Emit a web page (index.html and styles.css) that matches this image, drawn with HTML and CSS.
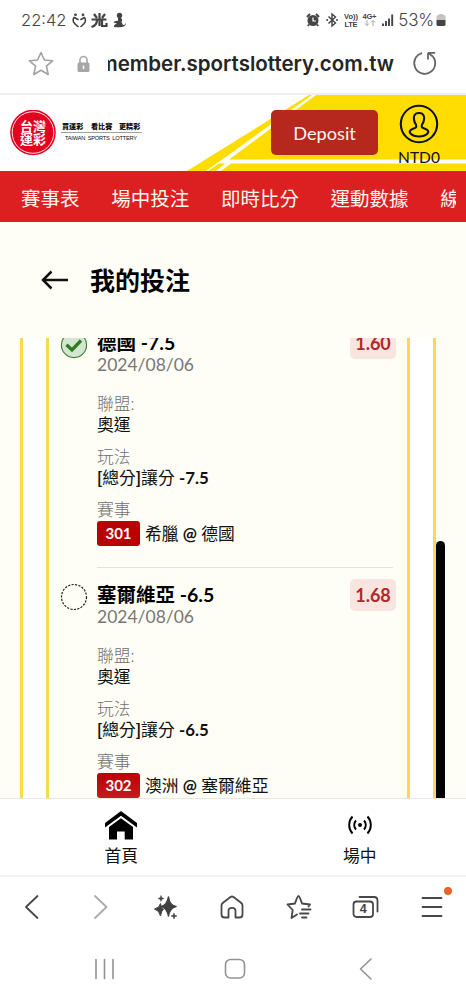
FILE: index.html
```html
<!DOCTYPE html>
<html lang="zh-Hant">
<head>
<meta charset="utf-8">
<title>我的投注</title>
<link rel="stylesheet" href="styles.css">
</head>
<body>
<div class="phone">
  <div class="status">
    <span class="clock">22:42</span>
    <svg class="status-left" width="54" height="18" viewBox="0 0 54 18">
      <path d="M2 5.500C-.5 9.500 3 12 6 14.500M12.500 5.500C15 9.500 12 12 9 14.500M2.300 5.500L6 7.500M12.300 5.500L9 7.500" fill="none" stroke="#444" stroke-width="1.600" stroke-linecap="round"/>
      <circle cx="3.500" cy="2.800" r="1.400" fill="#444"/><circle cx="11" cy="2.800" r="1.400" fill="#444"/>
      <path d="M19.500 7.500H34.500M22 2L25 6M33 2L30 6M27.500 1V8M25 8C25 12 23 14 19.500 15M30 8V14H34.500V11M27.500 8V14" fill="none" stroke="#444" stroke-width="2.200"/>
      <circle cx="47.500" cy="3.500" r="2.700" fill="#444"/>
      <path d="M46 5.500C50 5 51 8 49.500 10L51 13C52.500 13.500 53 12 54 11C53.500 15.500 49 15.500 42 15C41.500 13 43.500 12 45 11.500L41.500 10.500C42.500 8.500 45 9.500 46 8.500Z" fill="#444"/>
    </svg>
    <svg class="status-right" width="91" height="20" viewBox="0 0 91 20">
      <circle cx="7" cy="10.500" r="5.500" fill="#444"/>
      <path d="M1 7L4 4M10 4L13 7M3 14.500L1.800 16M11 14.500L12.200 16" stroke="#444" stroke-width="2"/>
      <path d="M7 7.500V11H10" fill="none" stroke="#fff" stroke-width="1.200"/>
      <path d="M22.500 6.500L29.500 13L26 16V4L29.500 7L22.500 13.500" fill="none" stroke="#444" stroke-width="1.400"/>
      <circle cx="21.200" cy="10" r="1" fill="#444"/><circle cx="31" cy="10" r="1" fill="#444"/>
      <text x="38" y="9" class="tiny" textLength="14">Vo))</text>
      <text x="38.500" y="16.500" class="tiny" textLength="13">LTE</text>
      <text x="56.500" y="9" class="tiny" textLength="14">4G+</text>
      <path d="M61 10V15.500M59 13.500L61 15.500L63 13.500M67 16V10.500M65 12.500L67 10.500L69 12.500" fill="none" stroke="#aaa"/>
      <path d="M77 16V13.500M80 16V11M83 16V8.500M86.200 16V4.500" stroke="#444" stroke-width="1.900"/>
    </svg>
    <span class="percent">53%</span>
    <svg width="10" height="14" viewBox="0 0 10 14"><path d="M3 1h4v1h1.500L9.500 3.500V7H.5V3.500L1.500 2H3Z" fill="#c4c4c4"/><path d="M.5 7h9v5l-1 1h-7l-1-1Z" fill="#444"/></svg>
  </div>

  <div class="address">
    <svg class="fav" width="26" height="26" viewBox="0 0 26 26"><path d="M13 1.500L16.400 9L24.500 9.800L18.400 15.200L20.200 23.500L13 19.200L5.800 23.500L7.600 15.200L1.500 9.800L9.600 9Z" fill="none" stroke="#a2a2a2" stroke-width="1.600" stroke-linejoin="round"/></svg>
    <svg class="lock" width="13" height="18" viewBox="0 0 13 18"><path d="M3 8V5a3.500 3.500 0 0 1 7 0V8" fill="none" stroke="#aaa" stroke-width="1.700"/><rect x=".5" y="7.500" width="12" height="9.500" rx="1.500" fill="#a6a6a6"/><path d="M6.500 10.500V14" stroke="#fff" stroke-width="1.500"/></svg>
    <div class="url"><span>member.sportslottery.com.tw</span></div>
    <svg class="reload" width="25" height="25" viewBox="0 0 25 25"><path d="M10 2.100A10.500 10.500 0 1 0 20.500 5.200L16 1.800M16 1.800H23.200M16 1.800V8.500" fill="none" stroke="#666" stroke-width="1.800"/></svg>
  </div>

  <header class="site-head">
    <svg class="head-art" width="466" height="76" viewBox="0 0 466 76">
      <path d="M187 76L309 0H466V76Z" fill="#ffdd00"/>
      <path d="M206 76L312 0L316 0L229 64.500H466V68.500H231L221 76H216L225 68.500H219L208 76Z" fill="#fffef5"/>
    </svg>
    <svg class="logo" width="132" height="46" viewBox="0 0 132 46">
      <circle cx="23" cy="22.500" r="22.800" fill="#e60020"/>
      <circle cx="23" cy="22.500" r="20.800" fill="none" stroke="#fff" stroke-width=".9"/>
      <text x="10" y="20.500" class="seal">台灣</text>
      <text x="10" y="34" class="seal">運彩</text>
      <text x="52" y="19" class="motto">買運彩</text><text x="81" y="19" class="motto">看比賽</text><text x="109" y="19" class="motto">更精彩</text>
      <path d="M51 22.500H132" stroke="#777" stroke-width=".7"/>
      <text x="55" y="30" class="brand" textLength="72">TAIWAN&#160; SPORTS&#160; LOTTERY</text>
    </svg>
    <button class="deposit">Deposit</button>
    <div class="account">
      <svg width="40" height="40" viewBox="0 0 40 40"><circle cx="20" cy="20" r="18.200" fill="none" stroke="#111" stroke-width="2.100"/><path d="M20 9C15.500 9 14.500 12 15 15.500C15.300 18 16 19.500 17 20.500C18 23.500 16.500 24 13.500 25C10.500 26.200 10 28 11.500 29.500C15.500 33.500 24.500 33.500 28.500 29.500C30 28 29.500 26.200 26.500 25C23.500 24 22 23.500 23 20.500C24 19.500 24.700 18 25 15.500C25.500 12 24.500 9 20 9Z" fill="none" stroke="#111" stroke-width="2.100"/></svg>
      <span>NTD0</span>
    </div>
  </header>

  <nav class="menu">
    <div class="menu-clip"><a>賽事表</a><a>場中投注</a><a>即時比分</a><a>運動數據</a><a>線上</a></div>
  </nav>

  <div class="title-row">
    <svg width="28" height="20" viewBox="0 0 28 20"><path d="M10.500 1.500L2 10L10.500 18.500M2 10H27" fill="none" stroke="#111" stroke-width="2.500"/></svg>
    <h1>我的投注</h1>
  </div>

  <main class="viewport">
    <div class="slip">
      <div class="card">
        <section class="bet">
          <svg class="mark" width="28" height="28" viewBox="0 0 28 28"><circle cx="14" cy="14" r="12.600" fill="#d3e6cf" stroke="#3f7d3a" stroke-width="1.100"/><path d="M6.500 13.800L12 19L21 9.500" fill="none" stroke="#2e7d24" stroke-width="3.300"/></svg>
          <div class="detail">
            <div class="pick">德國 -7.5</div>
            <div class="date">2024/08/06</div>
            <div class="group first"><div class="label">聯盟:</div><div class="value">奧運</div></div>
            <div class="group"><div class="label">玩法</div><div class="value"><b>[</b>總分<b>]</b>讓分 <b>-7.5</b></div></div>
            <div class="group"><div class="label">賽事</div></div>
            <div class="match"><span class="code">301</span><span>希臘 <b>@</b> 德國</span></div>
          </div>
          <span class="odds">1.60</span>
        </section>
        <section class="bet">
          <svg class="mark" width="28" height="28" viewBox="0 0 28 28"><circle cx="14" cy="14" r="12.500" fill="none" stroke="#222" stroke-width="1.200" stroke-dasharray="2.200 1.300"/></svg>
          <div class="detail">
            <div class="pick">塞爾維亞 -6.5</div>
            <div class="date">2024/08/06</div>
            <div class="group first"><div class="label">聯盟:</div><div class="value">奧運</div></div>
            <div class="group"><div class="label">玩法</div><div class="value"><b>[</b>總分<b>]</b>讓分 <b>-6.5</b></div></div>
            <div class="group"><div class="label">賽事</div></div>
            <div class="match"><span class="code shaded">302</span><span>澳洲 <b>@</b> 塞爾維亞</span></div>
          </div>
          <span class="odds">1.68</span>
        </section>
      </div>
    </div>
    <div class="track"><div class="thumb"></div></div>
  </main>

  <div class="tabs">
    <div class="tab">
      <svg width="32" height="30" viewBox="0 0 32 30"><path d="M0 12L16 0L32 12V16.500L16 4.700L0 16.500Z"/><path d="M4 16L16 7.200L28 16V28.500H19.700V20.500H12V28.500H4Z"/></svg>
      <span>首頁</span>
    </div>
    <div class="tab">
      <svg width="26" height="30" viewBox="0 0 26 30"><circle cx="13" cy="15" r="2"/><path d="M9 10.500A6.500 6.500 0 0 0 9 19.500M17 10.500A6.500 6.500 0 0 1 17 19.500M5.500 6.500A12.500 12.500 0 0 0 5.500 23.500M20.500 6.500A12.500 12.500 0 0 1 20.500 23.500" fill="none" stroke="#000" stroke-width="1.900"/></svg>
      <span>場中</span>
    </div>
  </div>

  <div class="toolbar">
    <svg viewBox="0 0 30 30"><path d="M20.500 4L9 15L20.500 26" class="line"/></svg>
    <svg viewBox="0 0 30 30"><path d="M11 4L22.500 15L11 26" class="line pale"/></svg>
    <svg viewBox="0 0 30 30"><g fill="#404040"><path d="M18.500 5Q19.500 13.500 26 14.500Q19.500 16 18.500 24Q17 16 11.500 14.500Q17 13.500 18.500 5Z" stroke="#404040" stroke-width="1.500" stroke-linejoin="round"/><path d="M10.500 11.500Q11 16 13.500 17Q11.500 18.500 10.500 24Q9.500 18.500 4.500 17Q9.500 16 10.500 11.500Z" stroke="#404040" stroke-linejoin="round"/><path d="M11 3.500L11.800 5.700L14 6.500L11.800 7.300L11 9.500L10.200 7.300L8 6.500L10.200 5.700ZM24 21L24.800 23.200L27 24L24.800 24.800L24 27L23.200 24.800L21 24L23.200 23.200Z" stroke="#404040" stroke-width=".5"/></g></svg>
    <svg viewBox="0 0 30 30"><path d="M4.500 13.500Q4.500 12 6 10.800L13.500 5Q15 4 16.500 5L24 10.800Q25.500 12 25.500 13.500V22.500Q25.500 25.500 22.500 25.500H18.500V19Q18.500 15.800 15 15.800T11.500 19V25.500H7.500Q4.500 25.500 4.500 22.500Z" class="line"/></svg>
    <svg viewBox="0 0 30 30"><path d="M13 22.500L7.500 26L8.700 18L3.500 12.500L11 11.500Q13.500 4 14.500 4T18 11.500L26 12.500L24.500 14.500M18 17.500H26.500M16 21.500H24.500M18 25.500H22.500" class="line"/></svg>
    <svg viewBox="0 0 30 30"><rect x="3.500" y="9.500" width="19.500" height="15.500" rx="3" class="line"/><path d="M9.500 5H24Q27.500 5 27.500 8.500V19.500" class="line"/><text x="13.300" y="21.300" class="count">4</text></svg>
    <svg viewBox="0 0 30 30"><path d="M5.500 6H24.500M5.500 15H24.500M5.500 24H24.500" class="line"/></svg>
    <i class="dot"></i>
  </div>

  <div class="sysnav">
    <svg viewBox="0 0 30 30"><path d="M6 5.500V24.500M14.500 5.500V24.500M23 5.500V24.500" class="line"/></svg>
    <svg viewBox="0 0 30 30"><rect x="4.500" y="5.500" width="19" height="18.500" rx="5" class="line"/></svg>
    <svg viewBox="0 0 30 30"><path d="M20 5L9.500 15L20 25" class="line"/></svg>
  </div>
</div>
</body>
</html>
```
FILE: styles.css
```css
* { box-sizing: border-box; }
body { margin: 0; font-family: Lato, "Noto Sans CJK TC", sans-serif; color: #111; }
svg { display: block; flex: none; }
.phone { width: 466px; height: 1000px; display: flex; flex-direction: column; background: #fff; overflow: hidden; }
.phone > * { flex: none; }

.status { height: 40px; padding: 0 20px 0 21px; display: flex; align-items: center; font-family: Inter, sans-serif; font-size: 16.500px; font-weight: 300; color: #444; }
.clock { width: 45px; }
.status-left { margin-left: 6px; margin-top: 2px; }
.status-right { margin-left: auto; }
.percent { margin-left: 1px; margin-right: 2px; letter-spacing: -0.2px; font-size: 17px; }
.tiny { font: 700 7.500px "Liberation Sans", sans-serif; fill: #444; }

.address { height: 53px; padding: 0 29px 6px 28px; display: flex; align-items: center; }
.lock { margin-left: 23px; }
.url { width: 286px; margin-left: 18px; overflow: hidden; display: flex; justify-content: flex-end; font-family: Inter, sans-serif; font-weight: 600; font-size: 20.500px; line-height: 32px; color: #252525; white-space: nowrap; }
.reload { margin-left: auto; }

.site-head { height: 78px; border-top: 2px solid #efefef; position: relative; display: flex; align-items: flex-start; padding: 0 26px 0 10px; background: #fff; }
.head-art { position: absolute; left: 0; top: 0; }
.logo { margin-top: 15px; }
.logo, .deposit, .account { position: relative; }
.seal { font: 700 13px "Noto Sans CJK TC", sans-serif; fill: #fff; }
.motto { font: 900 7.100px "Noto Sans CJK TC", sans-serif; fill: #111; }
.brand { font: 400 5.700px "Liberation Sans", sans-serif; fill: #111; }
.deposit { margin: 15px 0 0 129px; width: 107px; height: 45px; border: 0; border-radius: 5px; background: #b6271e; color: #fff8f4; font: 400 18.200px Lato, sans-serif; padding: 0; }
.account { margin-left: auto; width: 42px; height: 70px; margin-top: 9px; display: flex; flex-direction: column; align-items: center; font-size: 15.500px; line-height: 16px; }
.account span { margin-top: 5px; }

.menu { height: 51px; background: #dc1f21; padding: 0 10px 0 21px; }
.menu-clip { display: flex; gap: 31.700px; overflow: hidden; height: 51px; padding-top: 2px; align-items: center; color: #fff8ef; font-size: 19.500px; white-space: nowrap; }

.title-row { height: 116px; background: #fffef6; display: flex; align-items: center; gap: 21px; padding-left: 41px; }
.title-row h1 { margin: 0; font-size: 25px; line-height: 36px; font-weight: 700; color: #000; }

.viewport { height: 460px; background: #fffef6; display: flex; padding-left: 20px; overflow: hidden; }
.slip { width: 416px; border: solid #f9d94e; border-width: 0 3px; padding: 0 23px; background: #fff; }
.card { border: solid #f9d94e; border-width: 0 3px; height: 504px; margin-top: -22px; background: #fffef6; padding: 0 11px 0 11px; }
.bet { height: 252px; padding-top: 16px; display: flex; position: relative; font-size: 16.800px; }
.bet::after { content: ""; position: absolute; left: 37px; right: 3px; bottom: 0; height: 1px; background: #e4e1da; }
.mark { margin-top: -1px; width: 28px; }
.detail { margin-left: 9px; flex: 1; white-space: nowrap; }
.pick { font-size: 19.500px; line-height: 22px; font-weight: 700; color: #000; }
.date { font-size: 17.500px; line-height: 21px; color: #777; }
.group { margin-top: 11px; }
.group.first { margin-top: 17px; }
.label, .value { line-height: 21px; position: relative; top: 1px; }
.label { color: #707070; font-weight: 300; }
.value b { font-weight: 700; }
.match { margin-top: 2px; display: flex; gap: 5px; line-height: 25px; }
.code { width: 43px; height: 25px; border-radius: 3px; background: #b80005; color: #fff; text-align: center; font-size: 15px; font-weight: 700; }
.shaded { background: linear-gradient(#ba0005, #c51b20); }
.odds { width: 46px; height: 32px; margin-top: -5px; border-radius: 5px; background: #f8e5df; color: #b3282a; text-align: center; font-size: 18px; line-height: 33px; font-weight: 700; }
.track { width: 9px; padding-top: 203px; display: flex; }
.thumb { width: 9px; background: #000; border-radius: 5px 5px 0 0; }

.tabs { height: 79px; border-top: 1px solid #e6e6e3; border-bottom: 2px solid #f3f3f3; display: flex; padding: 10px 0 0 2px; }
.tab { flex: 0 0 238.500px; display: flex; flex-direction: column; align-items: center; font-size: 16.800px; line-height: 24px; }
.tab svg { margin-top: 2px; }
.tab span { margin-top: 3px; }
.tab:nth-child(2) svg { margin-top: 1px; }
.tab:nth-child(2) span { margin-top: 4px; }

.toolbar { height: 61px; position: relative; display: flex; justify-content: space-between; align-items: center; padding: 0 19px 1px 17px; }
.toolbar svg, .sysnav svg { width: 30px; height: 30px; }
.line { fill: none; stroke: #484848; stroke-width: 1.800; stroke-linecap: round; stroke-linejoin: round; }
.pale { stroke: #aaa; }
.count { font: 700 12.500px "Liberation Sans", sans-serif; fill: #444; text-anchor: middle; }
.dot { position: absolute; left: 444px; top: 10px; width: 8px; height: 8px; border-radius: 50%; background: #e8632a; }
.sysnav { height: 62px; display: flex; justify-content: space-between; align-items: center; padding: 0 85px 0 90px; }
.sysnav .line { stroke: #929292; stroke-width: 1.600; }
```
